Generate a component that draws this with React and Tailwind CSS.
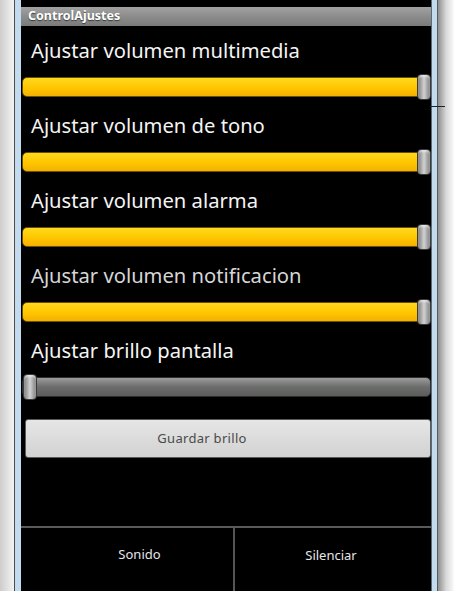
import React from "react";

function Thumb() {
  return (
    <div className="h-[26px] w-[14px] rounded-[4px] border border-[#3a3a3a] bg-gradient-to-r from-[#7c7c7c] via-[#d2d2d2] to-[#808080] shadow-[inset_0_2px_2px_rgba(255,255,255,0.5)]" />
  );
}

function YellowSlider() {
  return (
    <div className="flex h-[26px] items-center">
      <div className="ml-px h-[20px] flex-1 rounded-[5px] border border-[#6b5000] bg-gradient-to-b from-[#ffd91c] via-[#ffc800] to-[#f5b000]" />
      <div className="-ml-[6px]">
        <Thumb />
      </div>
    </div>
  );
}

function GraySlider() {
  return (
    <div className="relative flex h-[26px] items-center">
      <div className="ml-px h-[20px] flex-1 rounded-[5px] border border-[#2e2e2e] bg-gradient-to-b from-[#9c9c9c] via-[#6c6c6c] to-[#5a5d5a]" />
      <div className="absolute left-[2px] top-0">
        <Thumb />
      </div>
    </div>
  );
}

function Label({ children, dim }) {
  return (
    <div
      className={`h-[24px] whitespace-nowrap pl-[10px] text-[20.2px] leading-[24px] ${dim ? "text-[#d6d6d6]" : "text-[#f4f4f4]"}`}
    >
      {children}
    </div>
  );
}

export default function App() {
  const font = { fontFamily: '"Noto Sans", "Open Sans", sans-serif' };
  return (
    <div className="relative flex h-[591px] w-[454px] overflow-hidden bg-black" style={font}>
      {/* left frame */}
      <div className="flex h-full w-[21px] shrink-0">
        <div className="h-full w-[14px] bg-gradient-to-r from-[#cdcdcd] to-[#f3f3f3]" />
        <div className="h-full w-px bg-[#4c4c4c]" />
        <div className="h-full w-[6px] bg-[#c3dbef]" />
      </div>

      {/* screen */}
      <div className="flex h-full w-[410px] shrink-0 flex-col bg-black">
        <div className="h-[7px] bg-black" />
        <div className="flex h-[19px] items-center bg-gradient-to-b from-[#a2a2a2] via-[#8c8c8c] to-[#7a7a7a] pl-[7px] text-[12.5px] font-bold text-white [text-shadow:0_1px_1px_rgba(0,0,0,0.6)]">
          ControlAjustes
        </div>

        <div className="flex flex-col pt-[12px]">
          <Label>Ajustar volumen multimedia</Label>
          <div className="mt-[12px]">
            <YellowSlider />
          </div>
          <div className="mt-[13px]">
            <Label>Ajustar volumen de tono</Label>
          </div>
          <div className="mt-[12px]">
            <YellowSlider />
          </div>
          <div className="mt-[13px]">
            <Label>Ajustar volumen alarma</Label>
          </div>
          <div className="mt-[12px]">
            <YellowSlider />
          </div>
          <div className="mt-[13px]">
            <Label dim>Ajustar volumen notificacion</Label>
          </div>
          <div className="mt-[12px]">
            <YellowSlider />
          </div>
          <div className="mt-[13px]">
            <Label>Ajustar brillo pantalla</Label>
          </div>
          <div className="mt-[12px]">
            <GraySlider />
          </div>
          <div className="ml-[4px] mt-[19px] flex h-[39px] items-center justify-center rounded-[3px] border border-[#5a5a5a] bg-gradient-to-b from-[#e6e6e6] to-[#d2d2d2] pr-[52px] text-[13px] tracking-[0.3px] text-[#4a4a4a]">
            Guardar brillo
          </div>
        </div>

        <div className="flex-1" />

        <div className="h-[2px] bg-[#5a5a5a]" />
        <div className="flex h-[63px]">
          <div className="flex w-[212px] items-center justify-center pb-[10px] pl-[25px] text-[13px] text-[#e6e6e6]">
            Sonido
          </div>
          <div className="w-[2px] bg-[#555]" />
          <div className="flex flex-1 items-center justify-center pb-[8px] pr-[4px] text-[13px] text-[#e6e6e6]">
            Silenciar
          </div>
        </div>
      </div>

      {/* right frame */}
      <div className="flex h-full flex-1">
        <div className="h-full w-px bg-[#5a6a78]" />
        <div className="h-full w-[5px] bg-[#c3dbef]" />
        <div className="h-full w-px bg-[#5a5a5a]" />
        <div className="h-full flex-1 bg-gradient-to-r from-[#8e8e8e] via-[#d8d8d8] to-[#fbfbfb]" />
      </div>

      {/* small emulator artifact line */}
      <div className="absolute left-[430px] top-[106px] h-px w-[15px] bg-[#222]" />
    </div>
  );
}
